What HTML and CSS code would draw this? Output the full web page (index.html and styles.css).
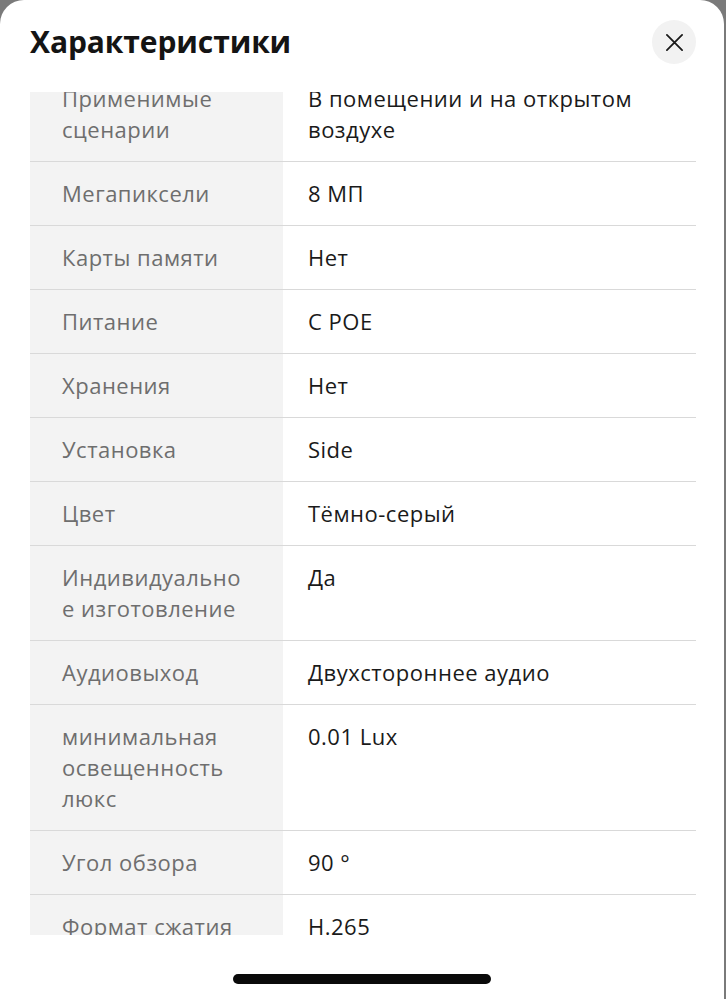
FILE: index.html
```html
<!DOCTYPE html>
<html lang="ru">
<head>
<meta charset="utf-8">
<link rel="stylesheet" href="styles.css">
</head>
<body>
<div class="sheet">
  <header class="header">
    <h1 class="title">Характеристики</h1>
    <button class="close" aria-label="Закрыть">
      <svg width="20" height="20" viewBox="0 0 20 20"><path d="M2 2 L18 18 M18 2 L2 18" stroke="#1a1a1a" stroke-width="1.9" stroke-linecap="round" fill="none"/></svg>
    </button>
  </header>
  <div class="scroll">
    <div class="specs">
      <div class="row"><div class="label">Применимые сценарии</div><div class="value">В помещении и на открытом воздухе</div></div>
      <div class="row"><div class="label">Мегапиксели</div><div class="value">8 МП</div></div>
      <div class="row"><div class="label">Карты памяти</div><div class="value">Нет</div></div>
      <div class="row"><div class="label">Питание</div><div class="value">С POE</div></div>
      <div class="row"><div class="label">Хранения</div><div class="value">Нет</div></div>
      <div class="row"><div class="label">Установка</div><div class="value">Side</div></div>
      <div class="row"><div class="label">Цвет</div><div class="value">Тёмно-серый</div></div>
      <div class="row"><div class="label">Индивидуальное изготовление</div><div class="value">Да</div></div>
      <div class="row"><div class="label">Аудиовыход</div><div class="value">Двухстороннее аудио</div></div>
      <div class="row"><div class="label">минимальная освещенность люкс</div><div class="value">0.01 Lux</div></div>
      <div class="row"><div class="label">Угол обзора</div><div class="value">90 °</div></div>
      <div class="row"><div class="label">Формат сжатия</div><div class="value">H.265</div></div>
    </div>
  </div>
  <div class="home-bar"><span class="pill"></span></div>
</div>
</body>
</html>
```
FILE: styles.css
```css
html, body {
  margin: 0;
  padding: 0;
}
body {
  background: #7a7a7a;
  font-family: "Open Sans", "Noto Sans", sans-serif;
  width: 726px;
  height: 999px;
  overflow: hidden;
}
.sheet {
  width: 724px;
  height: 999px;
  background: #ffffff;
  border-radius: 24px 24px 0 0;
  display: flex;
  flex-direction: column;
  overflow: hidden;
}
.header {
  display: flex;
  align-items: center;
  justify-content: space-between;
  padding: 20px 28px 28px 30px;
  height: 44px;
}
.title {
  margin: 0;
  font-family: "Open Sans", sans-serif;
  font-weight: 700;
  font-size: 30px;
  line-height: 44px;
  color: #141414;
  letter-spacing: -0.1px;
}
.close {
  width: 44px;
  height: 44px;
  border-radius: 50%;
  border: none;
  background: #f2f2f2;
  display: flex;
  align-items: center;
  justify-content: center;
  padding: 0;
}
.close svg {
  width: 19px;
  height: 19px;
}
.scroll {
  height: 843px;
  overflow: hidden;
  margin: 0 28px 0 30px;
}
.specs {
  margin-top: -25px;
}
.row {
  display: grid;
  grid-template-columns: 253px 1fr;
  border-bottom: 1px solid #d9d9d9;
  font-size: 22px;
  line-height: 31px;
  letter-spacing: 0.5px;
}
.label {
  background: #f3f3f3;
  color: #6e6e6e;
  padding: 16px 37px 16px 32px;
  overflow-wrap: anywhere;
}
.value {
  color: #1a1a1a;
  padding: 16px 20px 16px 25px;
}
.home-bar {
  flex: 1;
  display: flex;
  justify-content: center;
  padding-top: 39px;
}
.pill {
  width: 258px;
  height: 10px;
  border-radius: 5px;
  background: #0a0a0a;
}
```
